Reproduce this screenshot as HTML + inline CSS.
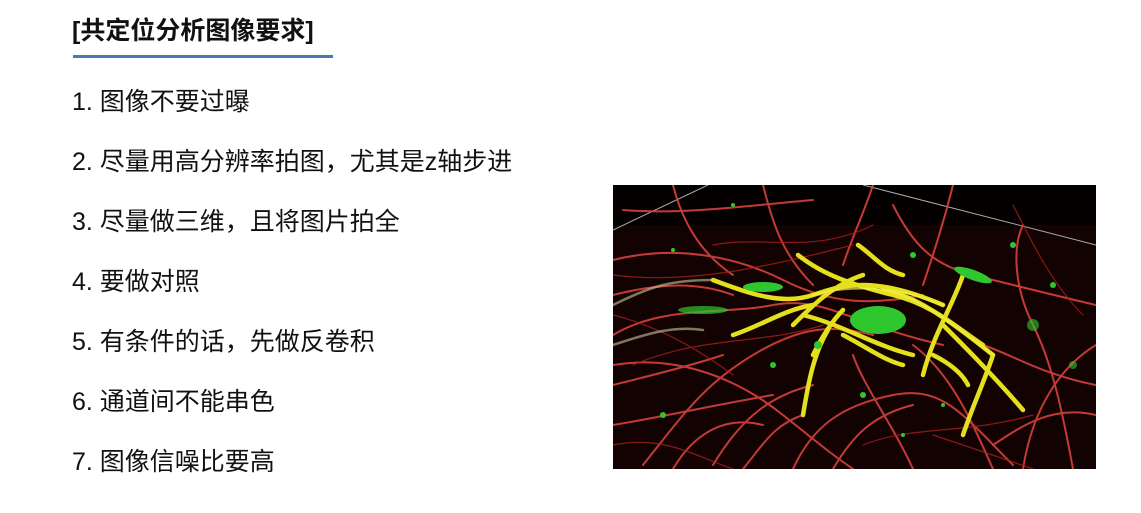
<!DOCTYPE html>
<html><head><meta charset="utf-8"><style>
html,body{margin:0;padding:0;background:#fff;width:1141px;height:513px;overflow:hidden}
body{position:relative;font-family:"Liberation Sans","Noto Sans CJK SC",sans-serif;color:#111}
.t{position:absolute;left:72px;top:15px;font-size:25px;font-weight:bold;line-height:32px}
.u{position:absolute;left:73px;top:55px;width:260px;height:3px;background:#4c79b5}
.l{position:absolute;left:72px;font-size:25px;line-height:30px}
svg{position:absolute;left:613px;top:185px}
</style></head><body>
<div class="t">[共定位分析图像要求]</div>
<div class="u"></div>
<div class="l" style="top:87px">1. 图像不要过曝</div>
<div class="l" style="top:147px">2. 尽量用高分辨率拍图，尤其是z轴步进</div>
<div class="l" style="top:207px">3. 尽量做三维，且将图片拍全</div>
<div class="l" style="top:267px">4. 要做对照</div>
<div class="l" style="top:327px">5. 有条件的话，先做反卷积</div>
<div class="l" style="top:387px">6. 通道间不能串色</div>
<div class="l" style="top:447px">7. 图像信噪比要高</div>
<svg width="483" height="284" viewBox="0 0 483 284">
<rect width="483" height="284" fill="#050000"/>
<rect y="40" width="483" height="244" fill="#120202"/>
<path d="M0 45 L95 0 M250 0 L483 60" stroke="#aaa" stroke-width="1" fill="none"/>
<g fill="none" stroke-linecap="round">
<g stroke="#d8413c" stroke-width="2" opacity="0.9">
<path d="M0 75 C60 60 120 70 170 95 S260 120 310 110"/>
<path d="M0 150 C50 120 110 130 160 120 S240 140 330 160"/>
<path d="M10 25 C70 30 140 20 200 15"/>
<path d="M30 280 C70 230 90 200 140 170 S220 140 260 150"/>
<path d="M100 280 C130 230 160 210 200 200"/>
<path d="M180 284 C200 240 230 220 280 210 S350 230 400 280"/>
<path d="M300 284 C280 240 250 200 240 170"/>
<path d="M380 284 C360 240 340 190 300 160"/>
<path d="M483 120 C440 110 400 100 360 90 S300 60 280 20"/>
<path d="M483 200 C430 190 400 170 370 160"/>
<path d="M460 284 C450 230 440 180 420 140 S400 60 410 40"/>
<path d="M0 200 C40 190 80 180 110 170"/>
<path d="M0 240 C60 230 100 220 160 210"/>
<path d="M60 0 C70 40 90 70 120 90"/>
<path d="M150 0 C160 40 170 70 200 100"/>
<path d="M483 160 C450 180 420 220 410 284"/>
<path d="M0 110 C40 100 80 95 120 110"/>
<path d="M220 284 C240 250 260 230 300 220"/>
<path d="M340 0 C330 40 320 70 310 100"/>
<path d="M130 284 C150 260 160 240 190 230"/>
<path d="M0 180 C60 170 120 190 170 230 S220 270 240 284"/>
<path d="M60 284 C80 250 110 230 150 240"/>
<path d="M483 230 C440 220 410 240 380 260"/>
<path d="M260 0 C250 30 240 50 230 80"/>
</g>
<g stroke="#a8201c" stroke-width="1.2" opacity="0.8">
<path d="M0 90 C80 100 160 80 240 60"/><path d="M20 180 C90 150 150 160 210 140"/>
<path d="M250 260 C300 240 350 250 420 230"/><path d="M100 60 C150 50 200 70 260 40"/>
<path d="M400 20 C420 60 440 100 470 130"/><path d="M0 260 C50 250 80 270 120 284"/>
<path d="M0 130 C40 140 80 160 120 190"/><path d="M320 250 C350 260 380 270 420 284"/>
</g>
<g stroke="#c8c89a" stroke-width="2.5" opacity="0.6"><path d="M0 120 C40 100 60 95 100 95"/><path d="M0 160 C30 150 60 140 90 145"/></g>
<g stroke="#e5e01c" stroke-width="4.5">
<path d="M100 95 C140 110 170 120 200 110 S260 90 330 120"/>
<path d="M190 130 C230 140 260 160 300 170"/>
<path d="M185 70 C210 90 240 100 280 110 S340 140 370 160"/>
<path d="M230 150 C250 160 270 175 290 180"/>
<path d="M270 105 C300 110 330 130 380 170"/>
<path d="M180 140 C200 120 220 100 250 90"/>
<path d="M200 170 C210 150 220 135 230 125"/>
<path d="M350 90 C340 120 320 150 310 190"/>
<path d="M190 230 C195 200 200 170 215 145"/>
<path d="M245 60 C260 70 270 85 290 90"/>
<path d="M320 170 C340 180 350 190 355 200"/>
<path d="M380 170 C370 200 360 220 350 250"/>
<path d="M330 140 C350 160 380 190 410 225"/>
<path d="M120 150 C150 140 170 125 200 120"/>
</g>
<g stroke="#f0f050" stroke-width="2" opacity="0.7"><path d="M200 110 S260 90 330 120"/><path d="M270 105 C300 110 330 130 380 170"/></g>
</g>
<g fill="#2ec82e">
<ellipse cx="265" cy="135" rx="28" ry="14"/><ellipse cx="150" cy="102" rx="20" ry="5"/>
<ellipse cx="360" cy="90" rx="20" ry="5" transform="rotate(20 360 90)"/>
<ellipse cx="90" cy="125" rx="25" ry="4" opacity="0.7"/>
<circle cx="420" cy="140" r="6" opacity=".6"/><circle cx="460" cy="180" r="4" opacity=".6"/>
<circle cx="250" cy="210" r="3"/><circle cx="50" cy="230" r="3"/><circle cx="120" cy="20" r="2"/>
<circle cx="330" cy="220" r="2"/><circle cx="400" cy="60" r="3"/><circle cx="60" cy="65" r="2"/>
<circle cx="440" cy="100" r="3"/><circle cx="160" cy="180" r="3"/><circle cx="290" cy="250" r="2"/>
<circle cx="205" cy="160" r="4"/><circle cx="300" cy="70" r="3"/>
</g>
</svg>
</body></html>
